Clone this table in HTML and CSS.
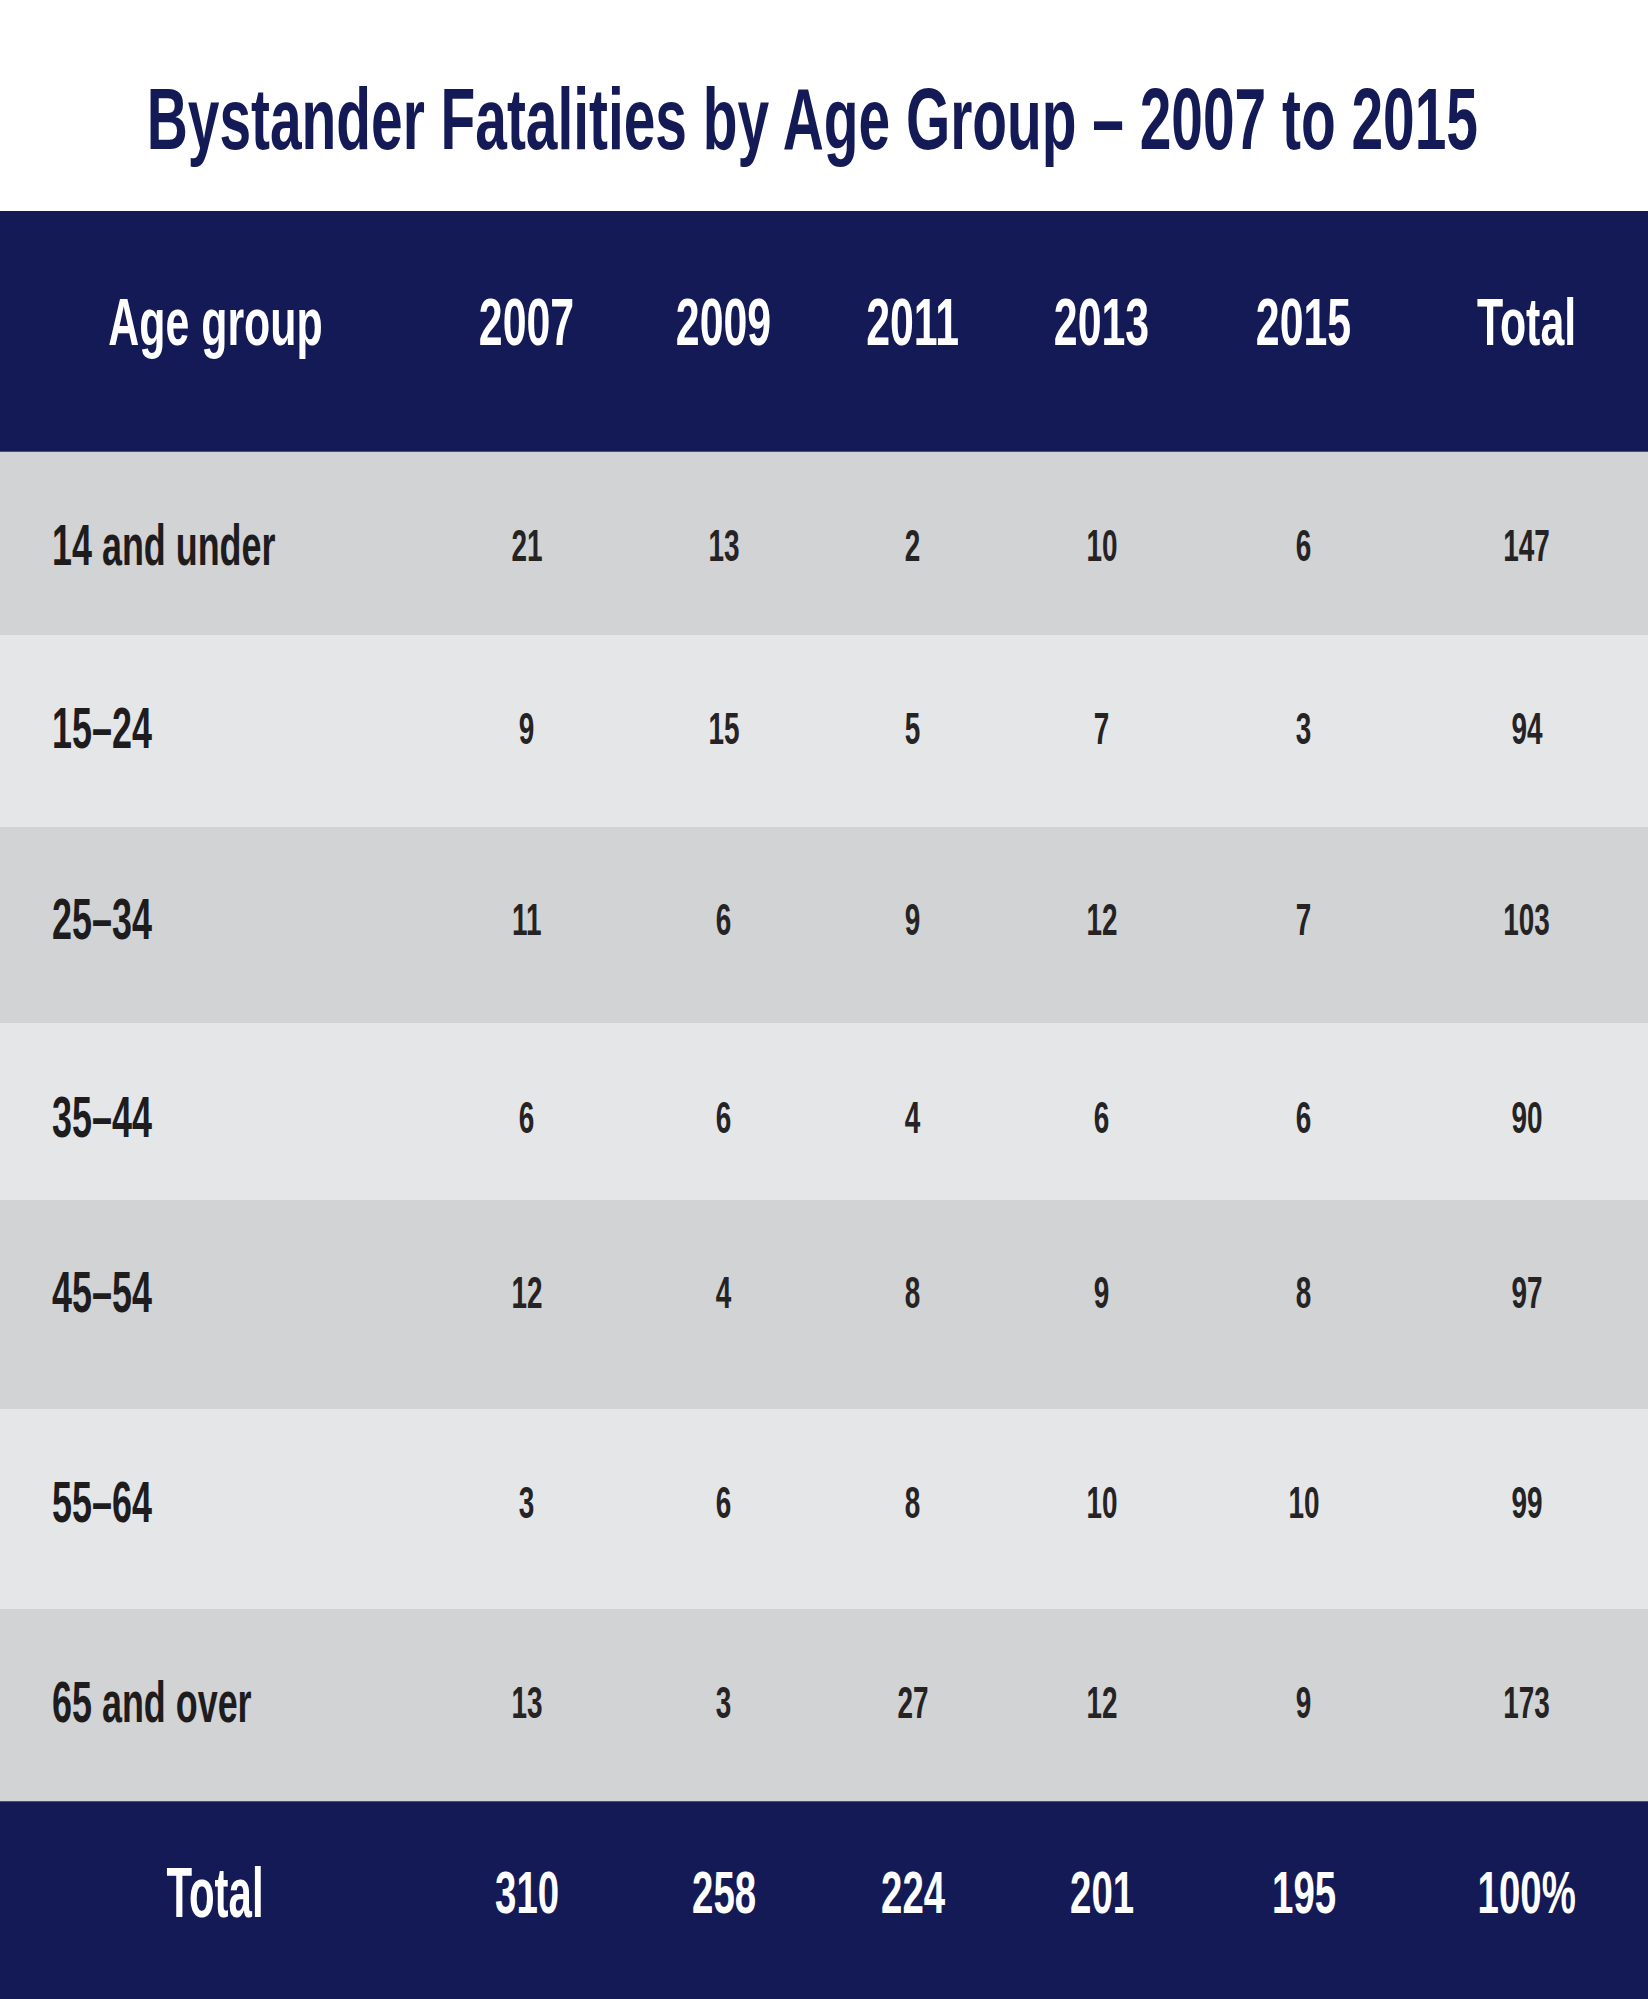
FILE: index.html
```html
<!DOCTYPE html>
<html lang="en">
<head>
<meta charset="utf-8">
<title>Bystander Fatalities by Age Group – 2007 to 2015</title>
<link rel="stylesheet" href="styles.css">
</head>
<body>
<header class="title-wrap">
  <h1 class="title"><span class="squeeze">Bystander Fatalities by Age Group – 2007 to 2015</span></h1>
</header>
<section class="table">
  <div class="row head">
    <div class="cell"><span class="squeeze">Age group</span></div>
    <div class="cell"><span class="squeeze">2007</span></div>
    <div class="cell"><span class="squeeze">2009</span></div>
    <div class="cell"><span class="squeeze">2011</span></div>
    <div class="cell"><span class="squeeze">2013</span></div>
    <div class="cell"><span class="squeeze">2015</span></div>
    <div class="cell"><span class="squeeze">Total</span></div>
  </div>
  <div class="row body dark r1">
    <div class="cell label"><span class="squeeze">14 and under</span></div>
    <div class="cell"><span class="squeeze">21</span></div>
    <div class="cell"><span class="squeeze">13</span></div>
    <div class="cell"><span class="squeeze">2</span></div>
    <div class="cell"><span class="squeeze">10</span></div>
    <div class="cell"><span class="squeeze">6</span></div>
    <div class="cell"><span class="squeeze">147</span></div>
  </div>
  <div class="row body light r2">
    <div class="cell label"><span class="squeeze">15–24</span></div>
    <div class="cell"><span class="squeeze">9</span></div>
    <div class="cell"><span class="squeeze">15</span></div>
    <div class="cell"><span class="squeeze">5</span></div>
    <div class="cell"><span class="squeeze">7</span></div>
    <div class="cell"><span class="squeeze">3</span></div>
    <div class="cell"><span class="squeeze">94</span></div>
  </div>
  <div class="row body dark r3">
    <div class="cell label"><span class="squeeze">25–34</span></div>
    <div class="cell"><span class="squeeze">11</span></div>
    <div class="cell"><span class="squeeze">6</span></div>
    <div class="cell"><span class="squeeze">9</span></div>
    <div class="cell"><span class="squeeze">12</span></div>
    <div class="cell"><span class="squeeze">7</span></div>
    <div class="cell"><span class="squeeze">103</span></div>
  </div>
  <div class="row body light r4">
    <div class="cell label"><span class="squeeze">35–44</span></div>
    <div class="cell"><span class="squeeze">6</span></div>
    <div class="cell"><span class="squeeze">6</span></div>
    <div class="cell"><span class="squeeze">4</span></div>
    <div class="cell"><span class="squeeze">6</span></div>
    <div class="cell"><span class="squeeze">6</span></div>
    <div class="cell"><span class="squeeze">90</span></div>
  </div>
  <div class="row body dark r5">
    <div class="cell label"><span class="squeeze">45–54</span></div>
    <div class="cell"><span class="squeeze">12</span></div>
    <div class="cell"><span class="squeeze">4</span></div>
    <div class="cell"><span class="squeeze">8</span></div>
    <div class="cell"><span class="squeeze">9</span></div>
    <div class="cell"><span class="squeeze">8</span></div>
    <div class="cell"><span class="squeeze">97</span></div>
  </div>
  <div class="row body light r6">
    <div class="cell label"><span class="squeeze">55–64</span></div>
    <div class="cell"><span class="squeeze">3</span></div>
    <div class="cell"><span class="squeeze">6</span></div>
    <div class="cell"><span class="squeeze">8</span></div>
    <div class="cell"><span class="squeeze">10</span></div>
    <div class="cell"><span class="squeeze">10</span></div>
    <div class="cell"><span class="squeeze">99</span></div>
  </div>
  <div class="row body dark r7">
    <div class="cell label"><span class="squeeze">65 and over</span></div>
    <div class="cell"><span class="squeeze">13</span></div>
    <div class="cell"><span class="squeeze">3</span></div>
    <div class="cell"><span class="squeeze">27</span></div>
    <div class="cell"><span class="squeeze">12</span></div>
    <div class="cell"><span class="squeeze">9</span></div>
    <div class="cell"><span class="squeeze">173</span></div>
  </div>
  <div class="row foot">
    <div class="cell foot-label"><span class="squeeze">Total</span></div>
    <div class="cell"><span class="squeeze">310</span></div>
    <div class="cell"><span class="squeeze">258</span></div>
    <div class="cell"><span class="squeeze">224</span></div>
    <div class="cell"><span class="squeeze">201</span></div>
    <div class="cell"><span class="squeeze">195</span></div>
    <div class="cell"><span class="squeeze">100%</span></div>
  </div>
</section>
</body>
</html>
```

FILE: styles.css
```css
* { box-sizing: border-box; }

html, body {
  margin: 0;
  padding: 0;
  background: #ffffff;
  overflow-x: hidden;
}

body {
  font-family: "Liberation Sans", Arial, sans-serif;
  font-weight: 700;
  color: #231f20;
}

.squeeze {
  display: inline-block;
  white-space: nowrap;
  transform-origin: 50% 50%;
}

/* Title */
.title-wrap {
  height: 211px;
  padding-top: 26px;
  padding-right: 24px;
  display: flex;
  align-items: center;
  justify-content: center;
  overflow: hidden;
}

.title {
  margin: 0;
  font-size: 88px;
  line-height: 1;
  font-weight: 700;
  color: #131a55;
  /* the squeezed span keeps its unscaled layout width; pull it back in */
  width: 1340px;
  flex: none;
  display: flex;
  justify-content: center;
}

.title .squeeze { transform: scaleX(0.646); }

/* Table */
.table {
  display: flex;
  flex-direction: column;
}

.row {
  display: grid;
  grid-template-columns: 430px 194px 200px 178px 200px 204px 242px;
  align-items: center;
}

.cell {
  text-align: center;
  line-height: 1;
}

.head {
  height: 241px;
  padding-bottom: 19px;
  background: #131a55;
  color: #ffffff;
  font-size: 67px;
  border-bottom: 1px solid #44508c;
}

.head .squeeze { transform: scaleX(0.64); }

.body {
  font-size: 45px;
  color: #262324;
}

.body .squeeze { transform: scaleX(0.62); }

.dark { background: #d1d3d4; }
.light { background: #e5e6e8; }

.label {
  text-align: left;
  padding-left: 52px;
  font-size: 57px;
  color: #1f1c1d;
}

.label .squeeze {
  transform-origin: 0 50%;
  transform: scaleX(0.63);
}

.r1 { height: 183px; padding-top: 4px; }
.r2 { height: 192px; padding-bottom: 6px; }
.r3 { height: 196px; padding-bottom: 12px; }
.r4 { height: 177px; padding-top: 11px; }
.r5 { height: 209px; padding-bottom: 25px; }
.r6 { height: 200px; padding-bottom: 14px; }
.r7 { height: 192px; padding-bottom: 6px; }

.foot {
  height: 198px;
  padding-bottom: 16px;
  background: #131a55;
  color: #ffffff;
  font-size: 60px;
  border-top: 1px solid #44508c;
}

.foot .squeeze { transform: scaleX(0.64); }

.foot-label { font-size: 70px; }

.foot .foot-label .squeeze { transform: scaleX(0.6); }
```
